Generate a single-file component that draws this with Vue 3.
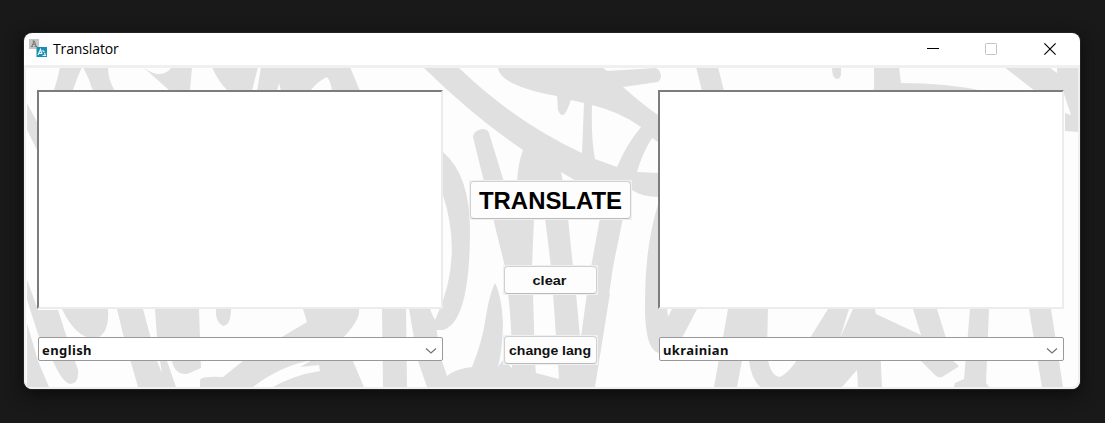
<script setup>
import { ref } from 'vue'

const source = ref('')
const result = ref('')
</script>

<template>
  <div class="desktop">
    <section class="window">
      <header class="titlebar">
        <svg class="logo" width="19" height="19" viewBox="0 0 19 19">
          <rect x="0" y="0" width="10" height="10" fill="#c6c6c6" />
          <path d="M2 7.5h2M5.5 7.5h2.5M3 7L5.2 2L7 7M3.6 5.3h2.8M3.5 2h2" stroke="#777" fill="none" />
          <rect x="7.5" y="8" width="10.5" height="10" fill="#168fb2" />
          <path d="M9 16L11.5 10.5L13 15M10 14.5h3M13.5 11.5l2 1.5M13.5 16.5h3l-1-2.5" stroke="#e4f6fa" stroke-width="1.2" fill="none" />
        </svg>
        <span class="title">Translator</span>
        <div class="controls">
          <svg width="12" height="14" viewBox="0 0 12 14"><path d="M0 6.5H12" stroke="#000" /></svg>
          <svg width="12" height="14" viewBox="0 0 12 14"><rect x=".5" y="1.5" width="11" height="11" rx="1" fill="none" stroke="#c3c3c3" /></svg>
          <svg width="12" height="14" viewBox="0 0 12 14"><path d="M.4 1.4L11.6 12.6M11.6 1.4L.4 12.6" stroke="#000" stroke-width="1.15" /></svg>
        </div>
      </header>

      <main class="content">
        <svg class="backdrop" viewBox="26 68 1052 319" preserveAspectRatio="none">
          <g fill="#e0e0e0">
            <path d="M60 67H82Q77 78 73 90H54Q58 78 60 67ZM83 67H108Q108 80 115 91H93Q89 78 83 67Z" />
            <path d="M143 67Q161 81 172 67H192L190 91H170ZM212 67H258L252 91H228Q217 80 212 67Z" />
            <path d="M261 67H350L360 91H332Q331 82 327 77Q318 81 310 91H281L279 83L277 91H257Z" />
            <path d="M423 67H458Q515 122 582 153L584 103L571 100L567 110Q562 120 558 110L557 96Q498 85 498 67H602L607 71L655 68Q660 69 661 75Q661 80 658 82L623 87Q642 104 658 115V142L652 138Q642 154 637 172L658 173V197Q642 197 632 190V182H578L561 172L563 182H517Q518 163 523 150Q475 118 423 67ZM592 105Q591 140 595 159L617 167Q626 145 641 127Q620 112 592 105Z" fill-rule="evenodd" />
            <path d="M473 137Q473 131 482 129Q488 129 489 133L504 182H484Z" />
            <path d="M443 152Q470 175 470 230Q470 322 443 330H433L420 310H430L435 320Q464 260 443 195Z" />
            <path d="M493 218H534L532 267H505ZM545 218H568L573 267H551ZM600 218H623L613 267L609 295H587L591 267Z" />
            <path d="M659 201Q645 245 645 300Q644 348 658 353L682 338L697 309H672L668 317L667 309H658Z" />
            <path d="M409 309H430L436 327L438 338L442 361L447 376Q455 369 472 367Q482 342 485 322Q489 295 495 283Q502 297 503 325Q502 353 498 367L503 360L512 368Q512 325 508 293H533L535 363L536 373L559 379L553 293H576L580 337H581L587 293H610L595 387H427L418 361Z" />
            <path d="M27 103L37 122V150L27 130ZM27 280L38 310H58L67 338L78 370Q79 384 70 384Q62 382 53 361L40 340L27 300ZM27 323L38 361L49 387H27Z" />
            <path d="M62 309Q75 337 94 339Q110 335 108 309ZM117 309H143L157 361L162 373L160 361H167L176 387H138L124 338Z" />
            <path d="M155 309H199L201 368L187 374Q175 375 172 361L157 338ZM216 309H231Q231 325 223 326Q215 322 216 309Z" />
            <path d="M200 387V380Q201 376 223 377L243 361L280 338L307 322L303 309H359Q361 319 343 338L364 387H273Q294 375 320 371L319 365L300 367L312 360Q280 366 253 387Z" />
            <path d="M382 309H406L407 387H383Z" />
            <path d="M728 309H768L767 350Q768 375 780 377Q793 371 810 338L828 309H849L840 338L853 309H875L876 314L921 335L913 309H937L946 338L953 361Q960 366 958 367L942 377Q938 378 935 375L921 361L880 345L882 387H858L857 370L842 387L828 387L840 361Q834 376 828 387H760Q751 378 749 361L744 350L737 387H714Z" />
            <path d="M970 309H989L986 383L989 387H954L955 383L964 379ZM1029 309H1051L1063 387H1042Z" />
            <path d="M696 67H718L724 91H702ZM832 67H841V75Q839 81 835 78Q832 76 832 67ZM874 67H899L901 83Q947 83 983 91H872L874 89Z" />
            <path d="M1004 67H1049L1057 73V67H1078V132L1065 131V113L1071 115L1063 91H1035Z" />
          </g>
        </svg>

        <textarea v-model="source" class="area source" spellcheck="false"></textarea>
        <textarea v-model="result" class="area result" spellcheck="false"></textarea>
        <div class="combo source">
          <span>english</span>
          <svg width="12" height="8" viewBox="0 0 12 8"><path d="M1 1.5L6 6L11 1.5" fill="none" stroke="#737373" stroke-width="1.2" /></svg>
        </div>
        <div class="combo result">
          <span>ukrainian</span>
          <svg width="12" height="8" viewBox="0 0 12 8"><path d="M1 1.5L6 6L11 1.5" fill="none" stroke="#737373" stroke-width="1.2" /></svg>
        </div>
        <div class="actions">
          <div class="frame big"><button><svg width="145" height="26"><text x="1" y="22" textLength="143" lengthAdjust="spacingAndGlyphs">TRANSLATE</text></svg></button></div>
          <div class="frame clear"><button><svg width="36" height="18"><text x="0.5" y="14" textLength="34" lengthAdjust="spacingAndGlyphs">clear</text></svg></button></div>
          <div class="frame swap"><button><svg width="84" height="18"><text x="1" y="14" textLength="82" lengthAdjust="spacingAndGlyphs">change lang</text></svg></button></div>
        </div>
      </main>
    </section>
  </div>
</template>

<style>
body { margin: 0; background: #191919; }
</style>

<style scoped>
* { box-sizing: border-box; }
.desktop {
  width: 1105px;
  height: 423px;
  padding: 33px 25px 34px 24px;
  background: #191919;
  overflow: hidden;
}
.window {
  width: 1056px;
  height: 356px;
  border-radius: 8px;
  overflow: hidden;
  background: #fff;
  box-shadow: 0 0 0 1px #222, 0 5px 18px #0b0b0b;
}
.titlebar {
  height: 32px;
  display: flex;
  align-items: center;
  padding: 0 24px 0 5px;
}
.logo { flex: none; margin-top: -2px; }
.title {
  margin: -2px 0 0 5px;
  font: 14px "Open Sans", "Noto Sans", sans-serif;
  letter-spacing: -0.12px;
  color: #000;
}
.controls { margin-left: auto; display: flex; gap: 46px; }
.controls svg { display: block; }
.controls svg:last-child { margin-left: 1px; }
.content {
  position: relative;
  height: 324px;
  border: 2px solid #f0f0f0;
  border-top-width: 3px;
  border-radius: 0 0 8px 8px;
  background: #fdfdfd;
  display: grid;
  grid-template-columns: 405px 1fr 405px;
  grid-template-rows: 219px 24px;
  row-gap: 28px;
  padding: 22px 15px 0 11px;
}
.backdrop {
  position: absolute;
  inset: 0;
  width: 1052px;
  height: 319px;
}
.area {
  position: relative;
  display: block;
  width: 406px;
  height: 219px;
  margin: 0;
  resize: none;
  outline: none;
  border: 2px solid;
  border-color: #7c7c7c #ececec #ececec #7c7c7c;
  background: #fff;
}
.source { grid-column: 1; }
.result { grid-column: 3; }
.area { grid-row: 1; }
.combo {
  grid-row: 2;
  position: relative;
  width: 405px;
  height: 24px;
  margin-left: 1px;
  padding: 0 5px 0 3px;
  display: flex;
  align-items: center;
  justify-content: space-between;
  border: 1px solid #999;
  border-radius: 2px;
  background: #fff;
  font: bold 13px "Noto Sans", sans-serif;
  letter-spacing: 0.4px;
  color: #111;
}
.combo span { padding-top: 1px; }
.combo svg { margin-top: 4px; }
.actions {
  grid-column: 2;
  grid-row: 1 / 3;
  display: flex;
  flex-direction: column;
  align-items: center;
  padding-top: 90px;
}
.frame {
  position: relative;
  flex: none;
  padding: 1px;
  background: #f0f0f0;
}
.frame button {
  display: flex;
  align-items: center;
  justify-content: center;
  width: 100%;
  height: 100%;
  padding: 0;
  border: 1px solid #d0d0d0;
  border-bottom-color: #bbb;
  border-radius: 4px;
  background: #fdfdfd;
}
.frame svg { display: block; }
.big { width: 163px; height: 40px; }
.clear { width: 95px; height: 30px; margin-top: 45px; }
.swap { width: 95px; height: 30px; margin-top: 40px; }
text { font: bold 13.3px "Liberation Sans", Arial, sans-serif; fill: #111; }
.big text { font-size: 24px; fill: #000; }
</style>
